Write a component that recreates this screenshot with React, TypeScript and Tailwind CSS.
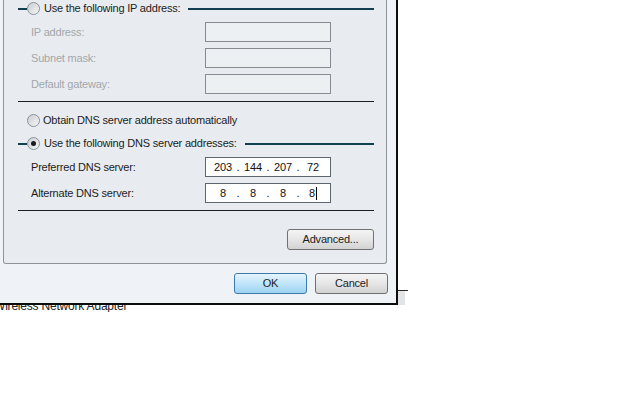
import React from 'react';

const font = { fontFamily: '"Liberation Sans", Arial, sans-serif' };

const Radio = ({ checked }: { checked?: boolean }) => (
  <span className="flex h-[13px] w-[13px] shrink-0 items-center justify-center rounded-full border border-[#8b9298] bg-gradient-to-br from-[#c9cdd1] to-[#f6f7f8]">
    {checked && <span className="h-[5px] w-[5px] rounded-full bg-[#1b1b1b]" />}
  </span>
);

const GroupHeader = ({ label, checked }: { label: string; checked?: boolean }) => (
  <div className="flex h-[17px] items-center">
    <span className="ml-[14px] h-[2px] w-[9px] bg-[#123f4d]" />
    <Radio checked={checked} />
    <span className="ml-[4px] text-[#1c1c1c]">{label}</span>
    <span className="ml-[8px] mr-[12px] h-[2px] flex-1 bg-[#123f4d]" />
  </div>
);

const Field = ({
  label,
  disabled,
  children,
  className = '',
}: {
  label: string;
  disabled?: boolean;
  children?: React.ReactNode;
  className?: string;
}) => (
  <div className={`flex h-[20px] items-center ${className}`}>
    <span className={`w-[174px] pl-[27px] ${disabled ? 'text-[#a3a7ab]' : 'text-[#1c1c1c]'}`}>{label}</span>
    <div
      className={`ml-[27px] flex h-[20px] w-[126px] items-center border ${
        disabled ? 'border-[#848c92] bg-[#edf0f3]' : 'border-[#5d666e] bg-white'
      }`}
    >
      {children}
    </div>
  </div>
);

const Octets = ({ values, caret }: { values: string[]; caret?: boolean }) => (
  <div className="flex items-center pl-[5px] text-[#111]">
    {values.map((v, i) => (
      <React.Fragment key={i}>
        {i > 0 && <span className="w-[6px] text-center">.</span>}
        <span className="flex w-[24px] items-center justify-center">
          {v}
          {caret && i === values.length - 1 && <span className="ml-[1px] h-[13px] w-px bg-black" />}
        </span>
      </React.Fragment>
    ))}
  </div>
);

const Button = ({ label, primary, className = '' }: { label: string; primary?: boolean; className?: string }) => (
  <div
    className={`flex h-[21px] items-center justify-center rounded-[3px] border text-[#1c1c1c] ${
      primary
        ? 'border-[#3d7bad] bg-gradient-to-b from-[#e6f5fd] via-[#bfe5f9] to-[#9ed3f1]'
        : 'border-[#707070] bg-gradient-to-b from-[#f4f4f4] via-[#e6e6e6] to-[#d2d2d2]'
    } ${className}`}
  >
    {label}
  </div>
);

export default function App() {
  return (
    <div className="h-[400px] w-[640px] overflow-hidden bg-white text-[11px] leading-none tracking-[-0.2px]" style={font}>
      <div className="flex">
        <div className="w-[398px] border-b-2 border-r-2 border-[#0c0c0c] bg-[#eff2f6] pb-[8px] pl-[3px] pr-[9px]">
          <div className="rounded-b-[3px] border-x border-b border-[#8d959b] bg-[#e8ecf0] pb-[13px]">
            <GroupHeader label="Use the following IP address:" />
            <Field label="IP address:" disabled className="mt-[5px]" />
            <Field label="Subnet mask:" disabled className="mt-[6px]" />
            <Field label="Default gateway:" disabled className="mt-[6px]" />
            <div className="ml-[14px] mr-[12px] mt-[7px] h-px bg-[#1e1e1e]" />
            <div className="mt-[10px] flex h-[17px] items-center pl-[23px]">
              <Radio />
              <span className="ml-[3px] text-[#1c1c1c]">Obtain DNS server address automatically</span>
            </div>
            <div className="mt-[6px]">
              <GroupHeader label="Use the following DNS server addresses:" checked />
            </div>
            <Field label="Preferred DNS server:" className="mt-[5px]">
              <Octets values={['203', '144', '207', '72']} />
            </Field>
            <Field label="Alternate DNS server:" className="mt-[6px]">
              <Octets values={['8', '8', '8', '8']} caret />
            </Field>
            <div className="ml-[14px] mr-[12px] mt-[7px] h-px bg-[#1e1e1e]" />
            <div className="mt-[18px] flex justify-end pr-[12px]">
              <Button label="Advanced..." className="w-[87px]" />
            </div>
          </div>
          <div className="-mr-[1px] mt-[9px] flex justify-end gap-[8px]">
            <Button label="OK" primary className="w-[73px]" />
            <Button label="Cancel" className="w-[73px]" />
          </div>
        </div>
        <div className="flex flex-col">
          <div className="mt-[290px] h-px w-[10px] bg-[#2a2a2a]" />
          <div className="h-[14px] w-[7px] bg-[#e2e4e6]" />
        </div>
      </div>
      <div className="h-[7px] overflow-hidden">
        <div className="-ml-[6px] -mt-[5px] text-[12px] text-[#222]">Wireless Network Adapter</div>
      </div>
    </div>
  );
}
